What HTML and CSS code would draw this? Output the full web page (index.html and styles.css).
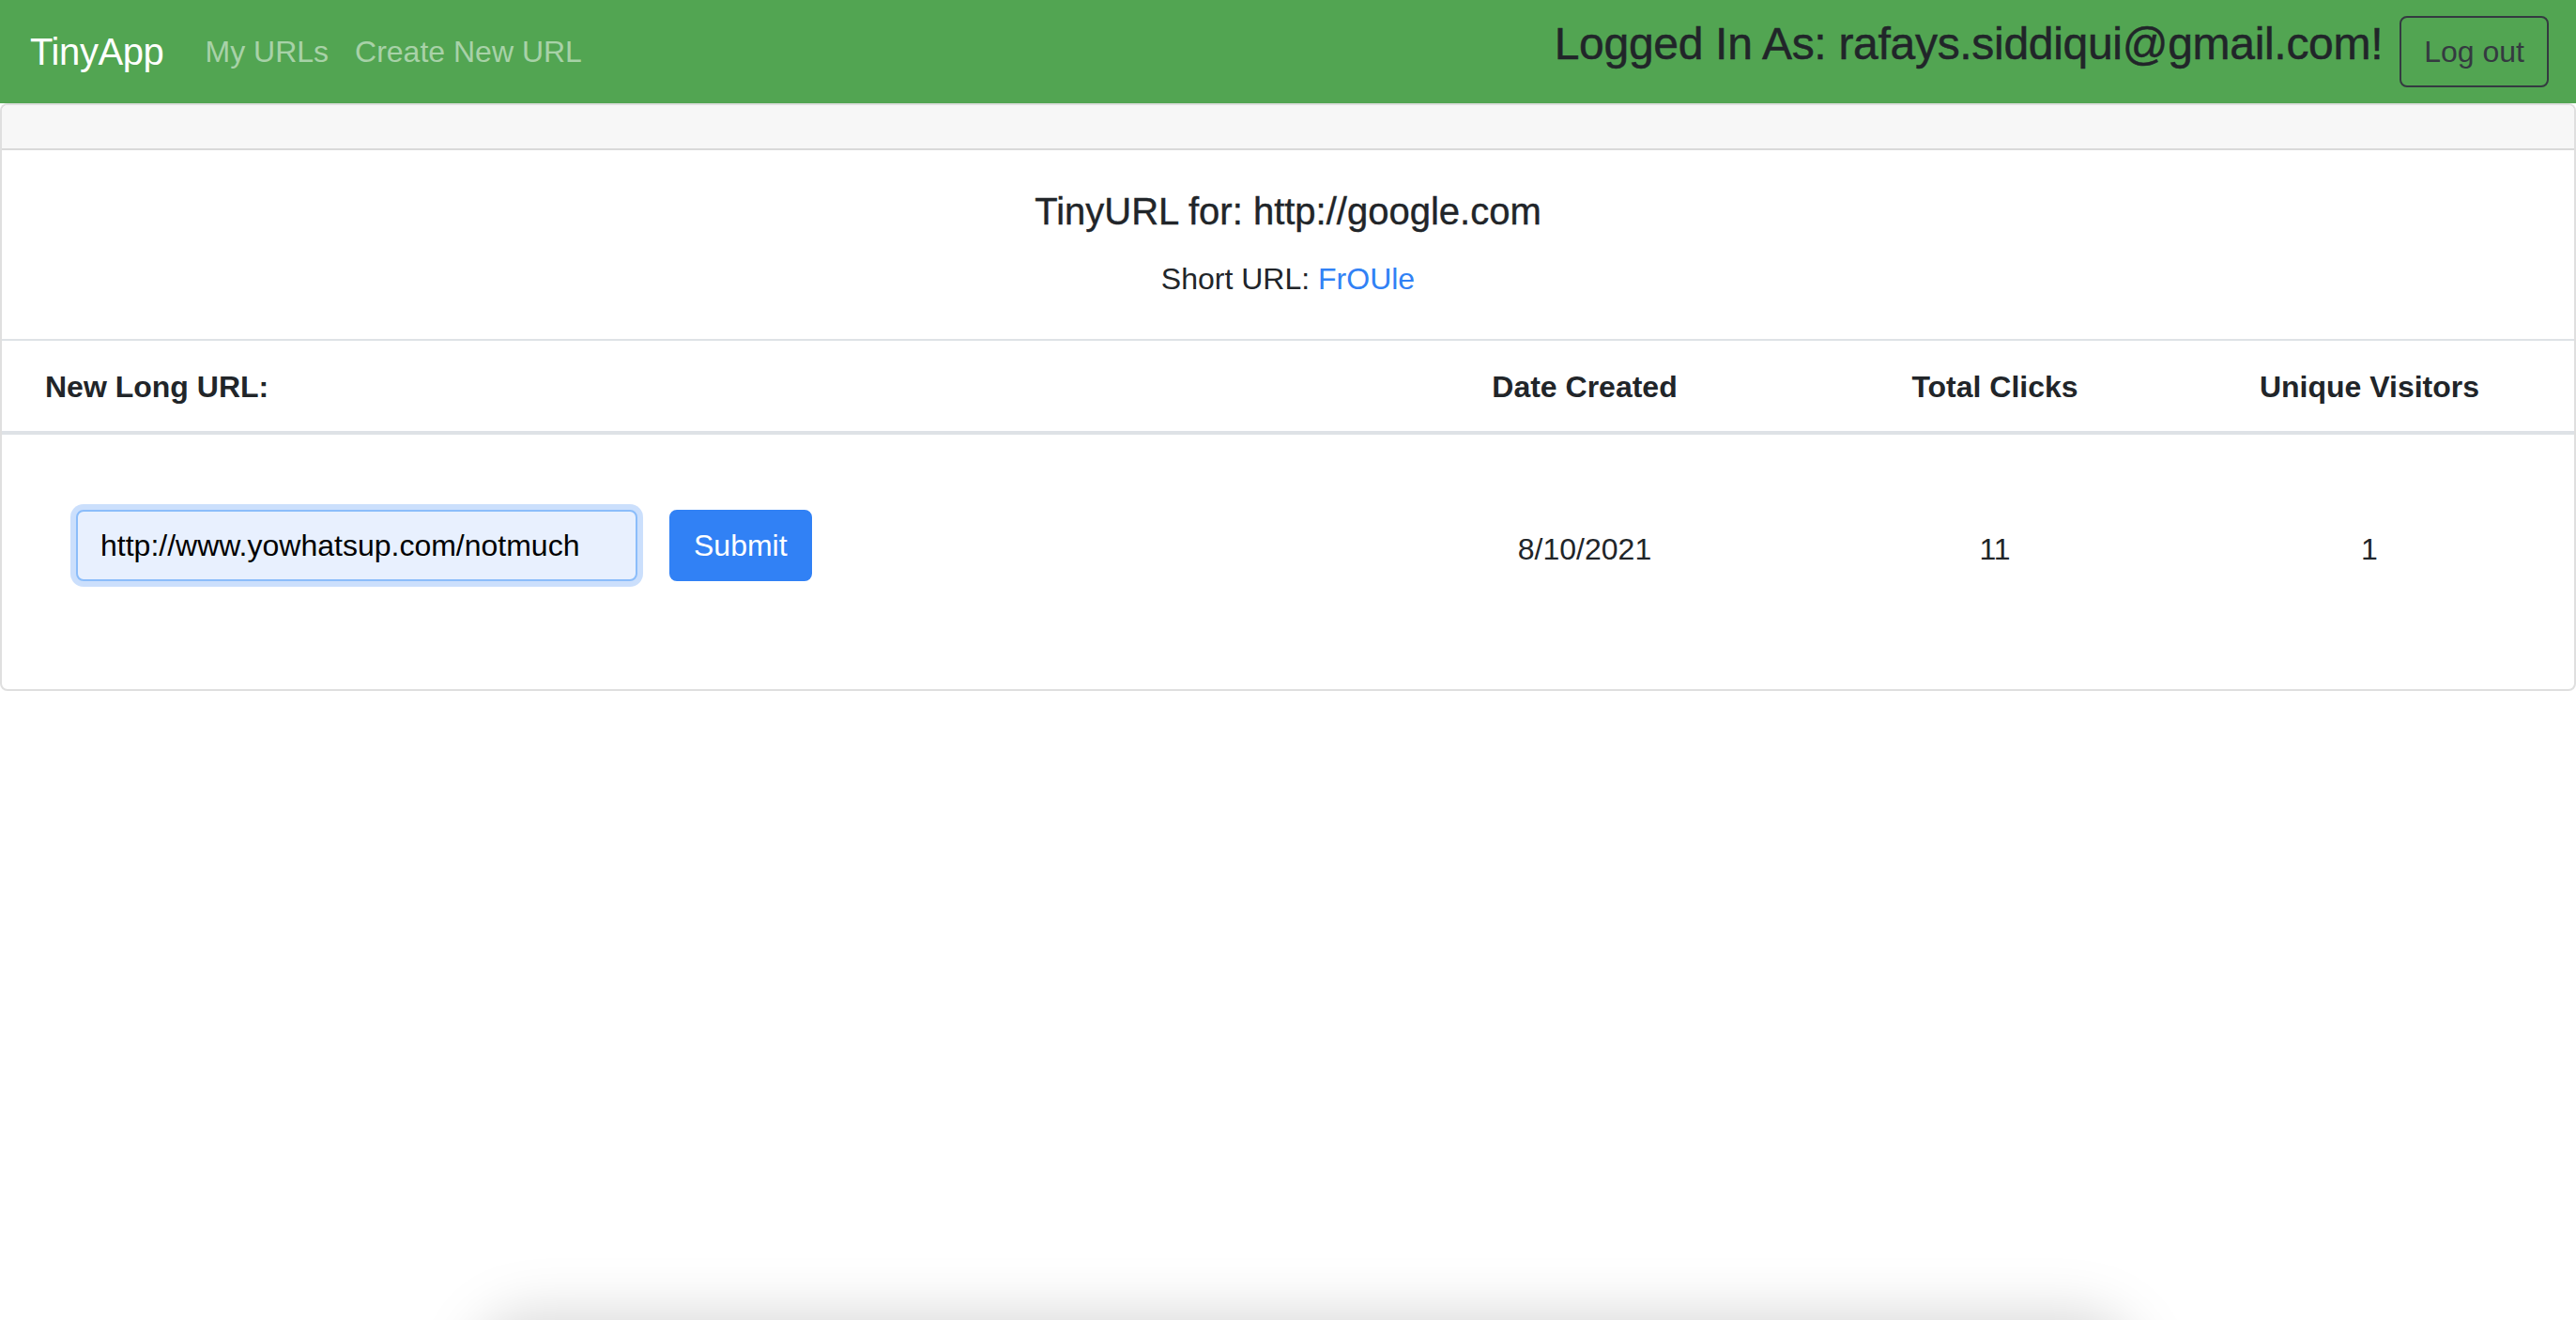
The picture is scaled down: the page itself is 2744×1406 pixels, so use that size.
FILE: index.html
```html
<!DOCTYPE html>
<html lang="en">
<head>
<meta charset="utf-8">
<title>TinyApp</title>
<link rel="stylesheet" href="styles.css">
</head>
<body>
  <nav class="navbar">
    <div class="nav-left">
      <a class="brand" href="#">TinyApp</a>
      <a class="nav-link" href="#">My URLs</a>
      <a class="nav-link" href="#">Create New URL</a>
    </div>
    <div class="nav-right">
      <h4 class="user">Logged In As: rafays.siddiqui@gmail.com!</h4>
      <button class="btn btn-outline-dark" type="button">Log out</button>
    </div>
  </nav>

  <main class="card">
    <div class="card-header"></div>
    <div class="card-body">
      <h5 class="card-title">TinyURL for: http://google.com</h5>
      <p class="card-text">Short URL: <a class="link" href="#">FrOUle</a></p>
    </div>
    <table class="table">
      <colgroup>
        <col class="col-url">
        <col class="col-date">
        <col class="col-clicks">
        <col class="col-visitors">
      </colgroup>
      <thead>
        <tr>
          <th class="th-left">New Long URL:</th>
          <th>Date Created</th>
          <th>Total Clicks</th>
          <th>Unique Visitors</th>
        </tr>
      </thead>
      <tbody>
        <tr>
          <td class="td-form">
            <form class="update-form">
              <input class="form-control" type="text" name="longURL" value="http://www.yowhatsup.com/notmuch">
              <button class="btn btn-primary" type="submit">Submit</button>
            </form>
          </td>
          <td class="td-data">8/10/2021</td>
          <td class="td-data">11</td>
          <td class="td-data">1</td>
        </tr>
      </tbody>
    </table>
  </main>

  <div class="dock-area"><div class="dock-shadow"></div></div>
</body>
</html>
```

FILE: styles.css
```css
* {
  box-sizing: border-box;
}

html {
  height: 100%;
  overflow: hidden;
}

body {
  height: 100%;
  margin: 0;
  overflow: hidden;
  background: #ffffff;
  color: #212529;
  font-family: "Liberation Sans", Arial, Helvetica, sans-serif;
  font-size: 32px;
  line-height: 1.5;
}

/* ---------- navbar ---------- */
.navbar {
  display: flex;
  align-items: center;
  justify-content: space-between;
  height: 110px;
  padding: 16px 29px 16px 32px;
  background: #52a552;
}

.nav-left {
  display: flex;
  align-items: center;
}

.brand {
  color: #ffffff;
  text-decoration: none;
  font-size: 40px;
  line-height: 60px;
  padding: 10px 0;
  margin-right: 30px;
  letter-spacing: -0.4px;
}

.nav-link {
  color: rgba(255, 255, 255, 0.5);
  text-decoration: none;
  font-size: 32px;
  line-height: 48px;
  padding: 16px 14px;
}

.nav-right {
  display: flex;
  align-items: center;
  gap: 18px;
}

.user {
  margin: 0 0 16px;
  font-size: 48px;
  font-weight: 500;
  line-height: 1.2;
  letter-spacing: -0.3px;
  color: #212529;
  -webkit-text-stroke: 0.5px #212529;
}

.btn {
  display: inline-block;
  font-family: inherit;
  font-size: 32px;
  line-height: 48px;
  padding: 12px 24px;
  border: 2px solid transparent;
  border-radius: 8px;
  cursor: pointer;
}

.btn-outline-dark {
  background: transparent;
  color: #343a40;
  border-color: #343a40;
}

.btn-primary {
  background: #3181f5;
  border-color: #3181f5;
  color: #ffffff;
}

/* ---------- card ---------- */
.card {
  display: block;
  width: 100%;
  border: 2px solid rgba(0, 0, 0, 0.125);
  border-radius: 8px;
  background: #ffffff;
}

.card-header {
  height: 48px;
  background: #f7f7f7;
  border-bottom: 2px solid #d9d9d9;
  border-radius: 6px 6px 0 0;
}

.card-body {
  padding: 41px 40px 40px;
  text-align: center;
}

.card-title {
  margin: 0 0 24px;
  font-size: 40px;
  font-weight: 500;
  line-height: 1.2;
  -webkit-text-stroke: 0.4px #212529;
}

.card-text {
  margin: 0;
}

.link {
  color: #3181f5;
  text-decoration: none;
}

/* ---------- table ---------- */
.table {
  width: 100%;
  border-collapse: collapse;
  table-layout: fixed;
}

.col-date {
  width: 512px;
}

.col-clicks {
  width: 362px;
}

.col-visitors {
  width: 436px;
}

.table th {
  padding: 25px 24px 23px;
  line-height: 48px;
  font-weight: 700;
  text-align: center;
  border-top: 2px solid #dee2e6;
  border-bottom: 4px solid #dee2e6;
}

.table th.th-left {
  text-align: left;
  padding-left: 46px;
}

.td-form {
  padding: 80px 0 115px 79px;
  vertical-align: top;
}

.update-form {
  display: flex;
  align-items: center;
  gap: 34px;
}

.form-control {
  width: 598px;
  height: 76px;
  padding: 12px 24px;
  font-family: inherit;
  font-size: 32px;
  color: #000000;
  background: #e8f0fe;
  border: 2px solid #8bbdfa;
  border-radius: 8px;
  box-shadow: 0 0 0 6px rgba(49, 129, 245, 0.25);
  outline: none;
}

.update-form .btn {
  height: 76px;
}

.td-data {
  padding: 98px 0 0;
  vertical-align: top;
  text-align: center;
  line-height: 48px;
}

/* ---------- screenshot artefact: shadow of an overlapping window ---------- */
.dock-area {
  position: fixed;
  left: 0;
  right: 0;
  bottom: 0;
  height: 80px;
  overflow: hidden;
  pointer-events: none;
}

.dock-shadow {
  position: absolute;
  left: 500px;
  top: 70px;
  width: 1780px;
  height: 140px;
  border-radius: 70px;
  background: rgba(0, 0, 0, 0.14);
  filter: blur(28px);
}
```
